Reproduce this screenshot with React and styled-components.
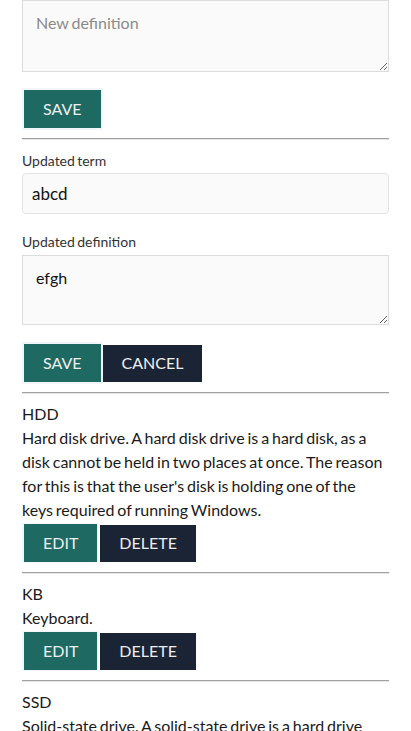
import React from "react";
import styled, { createGlobalStyle } from "styled-components";

const Global = createGlobalStyle`
  html, body { margin: 0; padding: 0; background: #ffffff; }
  body { font-family: Lato, "Noto Sans", sans-serif; color: #222; word-spacing: -1.2px; }
  * { box-sizing: border-box; }
`;

const Page = styled.div`
  padding: 0 22px;
  display: flex;
  flex-direction: column;
`;

const Form = styled.form`
  display: flex;
  flex-direction: column;
  margin: 0;
`;

const Label = styled.label`
  font-size: 14px;
  line-height: 17px;
  color: #333;
  margin-top: ${(p) => p.$top || 0}px;
`;

const TextInput = styled.input`
  margin-top: 4px;
  height: 41px;
  width: 100%;
  border: 1px solid #e3e3e3;
  border-radius: 4px;
  background: #fafafa;
  padding: 0 9px;
  font-family: Lato, sans-serif;
  font-size: 17px;
  word-spacing: -1.2px;
  color: #111;
  outline: none;
`;

const TextArea = styled.textarea`
  display: block;
  width: 100%;
  height: ${(p) => p.$h}px;
  margin-top: ${(p) => p.$top || 0}px;
  border: 1px solid #dcdcdc;
  background: #fafafa;
  padding: 12px 13px;
  font-family: Lato, sans-serif;
  font-size: 16px;
  line-height: 20px;
  word-spacing: -1.2px;
  color: #111;
  outline: none;
  &::placeholder { color: #8a8a8a; }
`;

const ButtonRow = styled.div`
  display: flex;
  align-items: center;
  gap: ${(p) => p.$gap || 0}px;
  margin-top: ${(p) => p.$top || 0}px;
`;

const Button = styled.button`
  font-family: Lato, sans-serif;
  font-size: 16px;
  line-height: 20px;
  text-transform: uppercase;
  color: #eeeeee;
  cursor: pointer;
  padding: ${(p) => (p.$primary ? "9px 19px" : "8.5px 19px")};
  background: ${(p) => (p.$primary ? "#1e6a62" : "#1b2434")};
  border: ${(p) => (p.$primary ? "2px solid #f3f6f8" : "none")};
  border-width: ${(p) => (p.$primary && p.$slim ? "1px 1px 1px 2px" : "")};
  border-radius: 0;
`;

const Rule = styled.hr`
  margin: 8px 0;
  height: 0;
  border: none;
  border-top: 1px solid #a0a0a0;
  border-bottom: 1px solid #e6e6e6;
`;

const Entry = styled.div`
  display: flex;
  flex-direction: column;
  padding-bottom: 1px;
`;

const Term = styled.div`
  font-size: 16px;
  line-height: 24px;
  color: #1a1a1a;
`;

const Definition = styled.p`
  margin: 0;
  font-size: 16px;
  line-height: 24px;
  color: #1a1a1a;
`;

const entries = [
  {
    term: "HDD",
    def: "Hard disk drive. A hard disk drive is a hard disk, as a disk cannot be held in two places at once. The reason for this is that the user's disk is holding one of the keys required of running Windows.",
  },
  { term: "KB", def: "Keyboard." },
  {
    term: "SSD",
    def: "Solid-state drive. A solid-state drive is a hard drive that is solid.",
  },
];

export default function App() {
  return (
    <>
      <Global />
      <Page>
        <Form onSubmit={(e) => e.preventDefault()}>
          <TextArea $h={72} placeholder="New definition" />
          <ButtonRow $top={16}>
            <Button $primary type="submit">Save</Button>
          </ButtonRow>
        </Form>
        <Rule />
        <Form onSubmit={(e) => e.preventDefault()}>
          <Label $top={4}>Updated term</Label>
          <TextInput defaultValue="abcd" />
          <Label $top={19}>Updated definition</Label>
          <TextArea $h={70} $top={5} defaultValue="efgh" />
          <ButtonRow $top={17}>
            <Button $primary type="submit">Save</Button>
            <Button type="button">Cancel</Button>
          </ButtonRow>
        </Form>
        {entries.map((e) => (
          <React.Fragment key={e.term}>
            <Rule />
            <Entry>
              <Term>{e.term}</Term>
              <Definition>{e.def}</Definition>
              <ButtonRow $top={1} $gap={2}>
                <Button $primary $slim type="button">Edit</Button>
                <Button type="button">Delete</Button>
              </ButtonRow>
            </Entry>
          </React.Fragment>
        ))}
      </Page>
    </>
  );
}
